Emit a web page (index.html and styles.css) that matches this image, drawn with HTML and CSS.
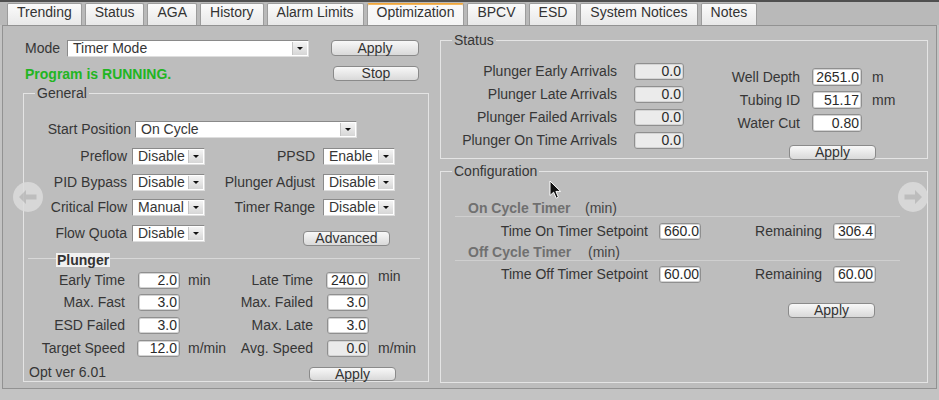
FILE: index.html
```html
<!DOCTYPE html>
<html>
<head>
<meta charset="utf-8">
<link rel="stylesheet" href="styles.css">
</head>
<body>
<div class="topband"></div>
<nav class="tabs">
  <div class="tab">Trending</div>
  <div class="tab">Status</div>
  <div class="tab">AGA</div>
  <div class="tab">History</div>
  <div class="tab">Alarm Limits</div>
  <div class="tab active">Optimization</div>
  <div class="tab">BPCV</div>
  <div class="tab">ESD</div>
  <div class="tab">System Notices</div>
  <div class="tab">Notes</div>
</nav>
<main class="pane">
  <section class="left">
    <div class="mode-row">
      <span class="mode-label">Mode</span>
      <div class="combo combo-mode"><span class="val">Timer Mode</span><span class="arr"></span></div>
      <div class="btn btn-top">Apply</div>
    </div>
    <div class="run-row">
      <span class="running">Program is RUNNING.</span>
      <div class="btn btn-stop">Stop</div>
    </div>
    <fieldset class="grp general">
      <legend>General</legend>
      <div class="start-row">
        <span class="start-label">Start Position</span>
        <div class="combo combo-start"><span class="val">On Cycle</span><span class="arr"></span></div>
      </div>
      <div class="opts">
        <span class="lbl">Preflow</span>
        <div class="combo sel"><span class="val">Disable</span><span class="arr"></span></div>
        <span class="lbl lbl-r">PPSD</span>
        <div class="combo sel"><span class="val">Enable</span><span class="arr"></span></div>

        <span class="lbl">PID Bypass</span>
        <div class="combo sel"><span class="val">Disable</span><span class="arr"></span></div>
        <span class="lbl lbl-r">Plunger Adjust</span>
        <div class="combo sel"><span class="val">Disable</span><span class="arr"></span></div>

        <span class="lbl">Critical Flow</span>
        <div class="combo sel"><span class="val">Manual</span><span class="arr"></span></div>
        <span class="lbl lbl-r">Timer Range</span>
        <div class="combo sel"><span class="val">Disable</span><span class="arr"></span></div>

        <span class="lbl">Flow Quota</span>
        <div class="combo sel"><span class="val">Disable</span><span class="arr"></span></div>
        <div class="btn btn-adv">Advanced</div>
      </div>
      <div class="plunger-head"><span>Plunger</span></div>
      <div class="plunger">
        <span class="lbl">Early Time</span><span class="fld">2.0</span><span class="unit">min</span>
        <span class="lbl">Late Time</span><span class="fld">240.0</span><span class="unit unit-r up">min</span>

        <span class="lbl">Max. Fast</span><span class="fld">3.0</span><span class="unit"></span>
        <span class="lbl">Max. Failed</span><span class="fld">3.0</span><span class="unit unit-r"></span>

        <span class="lbl">ESD Failed</span><span class="fld">3.0</span><span class="unit"></span>
        <span class="lbl">Max. Late</span><span class="fld">3.0</span><span class="unit unit-r"></span>

        <span class="lbl">Target Speed</span><span class="fld">12.0</span><span class="unit">m/min</span>
        <span class="lbl">Avg. Speed</span><span class="fld fld-dis">0.0</span><span class="unit unit-r">m/min</span>
      </div>
      <div class="foot">
        <span class="ver">Opt ver 6.01</span>
        <div class="btn btn-foot">Apply</div>
      </div>
    </fieldset>
  </section>

  <section class="right">
    <fieldset class="grp status">
      <legend>Status</legend>
      <div class="status-body">
        <div class="arrivals">
          <span class="lbl">Plunger Early Arrivals</span><span class="fld fld-dis">0.0</span>
          <span class="lbl">Plunger Late Arrivals</span><span class="fld fld-dis">0.0</span>
          <span class="lbl">Plunger Failed Arrivals</span><span class="fld fld-dis">0.0</span>
          <span class="lbl">Plunger On Time Arrivals</span><span class="fld fld-dis">0.0</span>
        </div>
        <div class="well">
          <div class="well-grid">
            <span class="lbl">Well Depth</span><span class="fld">2651.0</span><span class="unit">m</span>
            <span class="lbl">Tubing ID</span><span class="fld">51.17</span><span class="unit">mm</span>
            <span class="lbl">Water Cut</span><span class="fld">0.80</span><span class="unit"></span>
          </div>
          <div class="btn btn-well">Apply</div>
        </div>
      </div>
    </fieldset>

    <fieldset class="grp config">
      <legend>Configuration</legend>
      <div class="cfg-head cfg-head-1"><span class="cfg-title">On Cycle Timer</span><span class="cfg-unit">(min)</span></div>
      <div class="cfg-row cfg-row-1">
        <span class="lbl">Time On Timer Setpoint</span><span class="fld fld-l">660.0</span>
        <span class="lbl">Remaining</span><span class="fld fld-l fld-w">306.4</span>
      </div>
      <div class="cfg-head cfg-head-2"><span class="cfg-title">Off Cycle Timer</span><span class="cfg-unit">(min)</span></div>
      <div class="cfg-row cfg-row-2">
        <span class="lbl">Time Off Timer Setpoint</span><span class="fld fld-l">60.00</span>
        <span class="lbl">Remaining</span><span class="fld fld-l fld-w">60.00</span>
      </div>
      <div class="btn btn-cfg">Apply</div>
    </fieldset>
  </section>

  <svg class="nav-arrow nav-left" width="30" height="30" viewBox="0 0 30 30" aria-hidden="true">
    <circle cx="15" cy="15" r="15" fill="#dcdcdc"/>
    <path d="M6 15 L13 8 L13 12.5 L23.5 12.5 L23.5 17.5 L13 17.5 L13 22 Z" fill="#bdbdbd"/>
  </svg>
  <svg class="nav-arrow nav-right" width="30" height="30" viewBox="0 0 30 30" aria-hidden="true">
    <circle cx="15" cy="15" r="15" fill="#dcdcdc"/>
    <path d="M24 15 L17 8 L17 12.5 L6.5 12.5 L6.5 17.5 L17 17.5 L17 22 Z" fill="#bdbdbd"/>
  </svg>
  <svg class="cursor" width="14" height="20" viewBox="0 0 14 20" aria-hidden="true">
    <path d="M1 1 L1 15.5 L4.6 12.2 L7.2 18.2 L9.4 17.2 L6.9 11.4 L11.6 11.4 Z" fill="#111" stroke="#fff" stroke-width="1" stroke-linejoin="round"/>
  </svg>
</main>
</body>
</html>
```
FILE: styles.css
```css
* { box-sizing: border-box; }

html, body { margin: 0; }

body {
  width: 939px;
  height: 400px;
  overflow: hidden;
  background: #c3c3c3;
  font-family: "Liberation Sans", Arial, sans-serif;
  font-size: 14px;
  line-height: 16px;
  color: #363636;
}

.topband { height: 2px; background: #4f4f4f; }

.tabs {
  display: flex;
  align-items: flex-end;
  gap: 3px;
  height: 23px;
  padding-left: 7px;
  background: #b9b9b9;
}

.tab {
  height: 22px;
  padding: 0 9px;
  border: 1px solid #9c9c9c;
  border-bottom: none;
  border-radius: 2px 2px 0 0;
  background: linear-gradient(#fbfbfb, #e8e8e8);
  line-height: 16px;
  white-space: nowrap;
  color: #333;
}

.tab.active {
  background: linear-gradient(#fafafa, #f4f4f4);
  border-top-color: #eea43a;
  box-shadow: inset 0 1px 0 #f4b85e;
}

.pane {
  position: relative;
  height: 364px;
  margin: 0 2px;
  border: 1px solid #929292;
  background: #bdbdbd;
  display: flex;
  gap: 11px;
  padding: 6px 0 0 20px;
}

/* ---------- common controls ---------- */
.btn {
  height: 15px;
  border: 1px solid #8a8a8a;
  border-radius: 4px;
  background: linear-gradient(#f8f8f8, #d9d9d9);
  text-align: center;
  line-height: 13px;
  color: #333;
}

.combo {
  display: flex;
  height: 17px;
  background: #fff;
  border: 1px solid;
  border-color: #8a8a8a #dedede #dedede #8a8a8a;
}

.combo .val {
  flex: 1;
  padding-left: 5px;
  line-height: 15px;
  white-space: nowrap;
  overflow: hidden;
}

.combo .arr {
  width: 15px;
  margin: 1px 1px 1px 0;
  background: linear-gradient(#f4f4f4, #d6d6d6);
  border-left: 1px solid #c4c4c4;
  display: flex;
  align-items: center;
  justify-content: center;
}

.combo .arr::after {
  content: "";
  border-left: 3px solid transparent;
  border-right: 3px solid transparent;
  border-top: 3px solid #111;
}

.fld {
  height: 17px;
  background: #fff;
  border: 1px solid #8f8f8f;
  border-radius: 3px;
  box-shadow: inset 0 0 0 1px #d4d4d4;
  text-align: right;
  padding-right: 2px;
  line-height: 15px;
  color: #2a2a2a;
}

.fld-dis { background: #ebebeb; }

.lbl {
  text-align: right;
  line-height: 17px;
  white-space: nowrap;
}

.unit { line-height: 17px; white-space: nowrap; }

.grp {
  margin: 0;
  padding: 0;
  min-width: 0;
  border: 1px solid #e4e4e4;
}

.grp legend {
  margin-left: 11px;
  padding: 0 2px;
  line-height: 16px;
}

/* ---------- left column ---------- */
.left { width: 406px; padding-top: 8px; }

.mode-row {
  display: flex;
  align-items: flex-start;
  height: 17px;
  padding-left: 2px;
}

.mode-label { width: 42px; line-height: 17px; }

.combo-mode { width: 242px; }

.btn-top { width: 88px; height: 16px; margin-left: 22px; line-height: 14px; }

.run-row {
  display: flex;
  align-items: center;
  height: 17px;
  margin-top: 8px;
  padding-left: 2px;
}

.running { color: #22b522; font-weight: bold; }

.btn-stop { width: 86px; margin-left: auto; margin-right: 10px; }

.general { margin-top: 3px; width: 406px; }

.start-row { display: flex; margin-top: 20px; }

.start-label { width: 107px; text-align: right; line-height: 17px; }

.combo-start { width: 222px; margin-left: 4px; }

.opts {
  display: grid;
  grid-template-columns: 103px 73px 108px 72px;
  grid-auto-rows: 17px;
  column-gap: 5px;
  row-gap: 8.6px;
  margin-top: 10px;
}

.lbl-r { padding-right: 3px; }

.btn-adv {
  grid-column: 3 / 5;
  width: 87px;
  margin: 6px 0 0 93px;
}

.plunger-head {
  margin: 10px 8px 0 4px;
  height: 14px;
  background: linear-gradient(#d8d8d8, #d8d8d8) left center / 100% 1px no-repeat;
}

.plunger-head span {
  display: inline-block;
  margin-left: 28px;
  padding: 0 1px;
  background: #f1f1f1;
  font-weight: bold;
  line-height: 14px;
  color: #333;
}

.plunger {
  display: grid;
  grid-template-columns: 101px 55px 56px 77px 56px auto;
  grid-auto-rows: 17px;
  row-gap: 5.7px;
  margin-top: 6px;
}

.plunger .fld { width: 42px; justify-self: end; }
.plunger .fld:nth-child(5n) { width: 43px; }
.plunger .unit { padding-left: 8px; }
.plunger .unit-r { padding-left: 9px; }
.plunger .up { margin-top: -4px; }

.foot {
  display: flex;
  height: 17px;
  margin-top: 7px;
  padding-left: 5px;
}

.ver { line-height: 17px; }

.btn-foot { width: 87px; margin-left: auto; margin-right: 32px; align-self: flex-end; height: 14px; line-height: 12px; }

/* ---------- right column ---------- */
.right { width: 488px; }

.status { height: 127px; }

.status-body { display: flex; }

.arrivals {
  display: grid;
  grid-template-columns: 176px 50px;
  grid-auto-rows: 17px;
  column-gap: 17px;
  row-gap: 6px;
  margin-top: 15px;
}

.well { margin-top: 20px; }

.well-grid {
  display: grid;
  grid-template-columns: 128px 50px auto;
  grid-auto-rows: 18px;
  row-gap: 5px;
}

.well-grid .lbl { padding-right: 12px; line-height: 18px; }
.well-grid .fld { width: 50px; height: 18px; line-height: 16px; }
.well-grid .unit { padding-left: 10px; line-height: 18px; }

.btn-well { width: 87px; margin: 13px 0 0 105px; }

.config { height: 220px; margin-top: 4px; }

.cfg-head {
  margin: 0 27px 0 14px;
  padding-left: 13px;
  height: 17px;
  border-bottom: 1px solid #cfcfcf;
  display: flex;
}

.cfg-head-1 { margin-top: 21px; }
.cfg-head-2 { margin-top: 4px; }

.cfg-title { width: 117px; font-weight: bold; color: #707070; }
.cfg-head-2 .cfg-title { width: 120px; }

.cfg-unit { color: #444; }

.cfg-row {
  display: grid;
  grid-template-columns: 207px 53px 121px 54px;
  grid-auto-rows: 17px;
}

.cfg-row-1 { margin-top: 6px; }
.cfg-row-2 { margin-top: 5px; }

.fld-l { width: 42px; justify-self: end; text-align: left; padding-left: 4px; }
.fld-w { width: 43px; }

.btn-cfg { width: 87px; margin: 20px 0 0 347px; }

/* ---------- overlays ---------- */
.nav-arrow { position: absolute; top: 156px; opacity: 0.85; }
.nav-left { left: 10px; }
.nav-right { left: 895px; }

.cursor { position: absolute; left: 546px; top: 154px; }
```
